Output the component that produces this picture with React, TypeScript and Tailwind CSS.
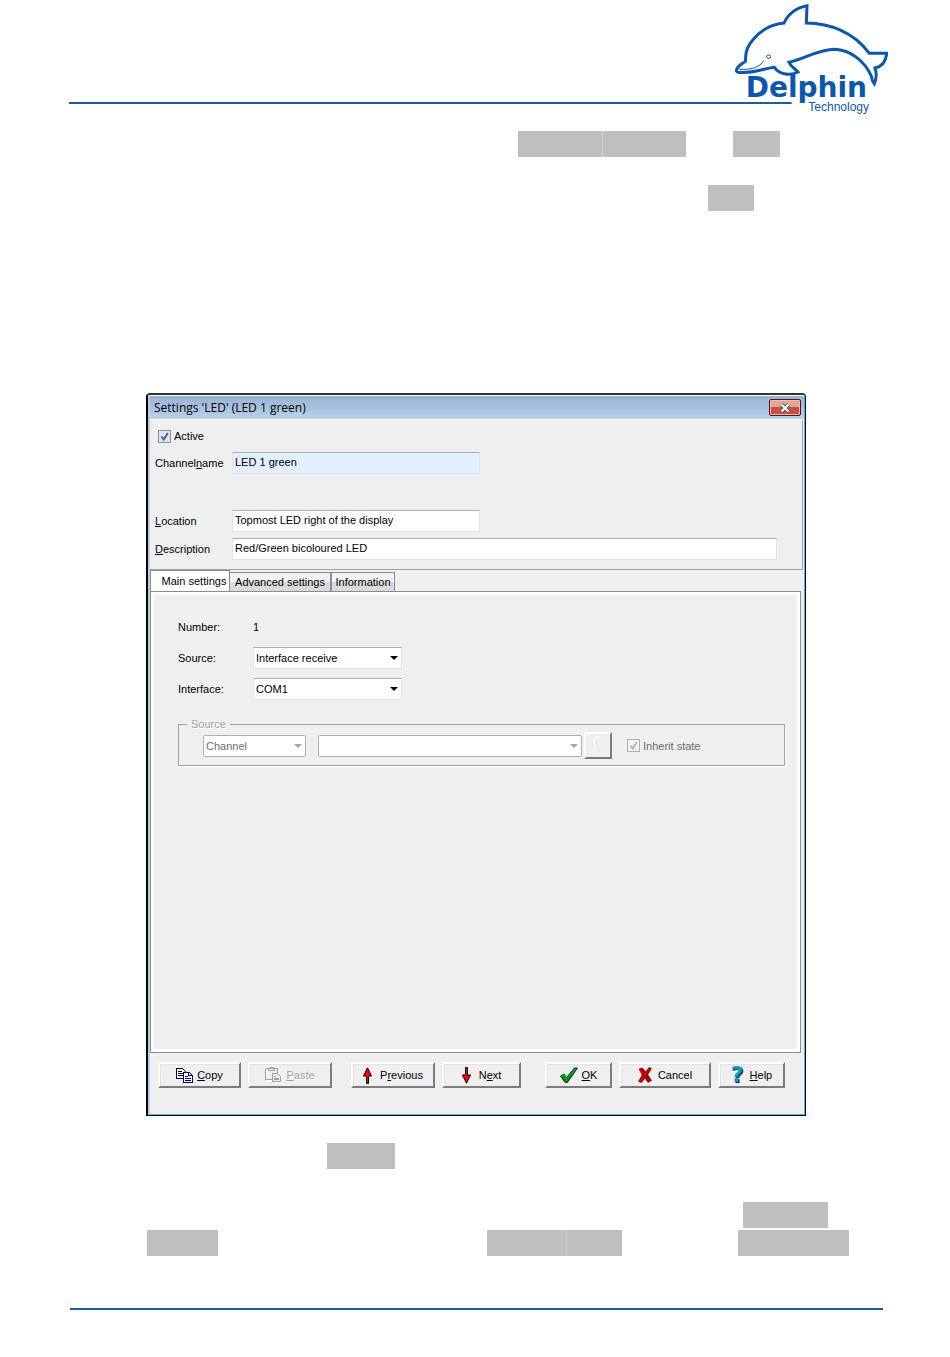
import React, { useState } from 'react';
import clsx from 'clsx';

const DelphinLogo: React.FC = () => (
  <svg viewBox="45 0 459 345" className="h-[115px] w-[153px] shrink-0" role="img" aria-label="Delphin Technology">
    <path d="M45 306H215V312H45Z" fill="#1b5aa9" />
    <g fill="none" stroke="#0b57ae" strokeWidth="9" strokeLinejoin="miter">
      <path d="M50 208C56 192 72 190 77 183C75 160 80 140 100 118C125 88 160 72 192 69C204 42 230 22 261 17L259 69C330 70 402 96 448 160H500C498 186 484 200 465 204C472 225 468 240 463 252C456 244 455 236 454 228C434 184 392 150 344 148C296 148 256 176 207 187C214 202 226 206 234 216C214 228 178 224 163 202C130 206 112 216 76 217C60 218 46 220 50 208Z" />
      <path d="M58 208C92 210 120 202 132 181" strokeWidth="3" />
      <ellipse cx="146" cy="170" rx="6" ry="5" strokeWidth="3" />
    </g>
    <g fill="#0b57ae">
      <text x="77" y="290" fontSize="84" fontWeight="700" fontFamily="DejaVu Sans, sans-serif">Delphin</text>
      <text x="265" y="332" fontSize="36" fontFamily="Liberation Sans, sans-serif">Technology</text>
    </g>
  </svg>
);

const CopyIcon: React.FC = () => (
  <svg viewBox="0 0 17 15" className="h-[15px] w-[17px]" shapeRendering="crispEdges">
    <path d="M.5 .5H6.5L9.5 3.5V10.5H.5Z" fill="#fff" stroke="#000" />
    <path d="M2 3.5H6M2 5.5H7M2 7.5H7" stroke="#000" />
    <path d="M7.5 4.5H13.5L16.5 7.5V14.5H7.5Z" fill="#fff" stroke="#000080" />
    <path d="M12.5 4.5V7.5H16M9 8.5H12M9 10.5H15M9 12.5H15" fill="none" stroke="#000080" />
  </svg>
);

const PasteIcon: React.FC = () => (
  <svg viewBox="0 0 17 16" className="h-4 w-[17px]" shapeRendering="crispEdges" fill="none">
    <path d="M2.5 3.5H14.5V8M2.5 3.5V13.5H8" stroke="#fff" />
    <path d="M1 1.5H12.5V7M.5 1.5V12.5H7M3.5 3.5H9.5V1.5H8V.5H5V1.5H3.5Z" stroke="#a0a0a0" />
    <path d="M7.5 6.5H12.5L15.5 9.5V14.5H7.5ZM9 9.5H11M9 11.5H14M9 12.5H14" stroke="#a0a0a0" />
    <path d="M8 15.5H16.5V10" stroke="#fff" />
  </svg>
);

const ArrowIcon: React.FC<{ down?: boolean }> = ({ down }) => (
  <svg viewBox="0 0 9 17" className={clsx('h-[17px] w-[9px]', down && 'rotate-180')}>
    <path d="M4.5 .8L8.5 9H5.5V16.5H3.5V9H.5Z" fill="#f00" stroke="#000" />
  </svg>
);

const OkIcon: React.FC = () => (
  <svg viewBox="0 0 18 16" className="h-4 w-[18px]">
    <path d="M.5 9L4 7L6.5 10.5L14.5 1H17.5L7.5 15.5H5Z" fill="#009000" stroke="#000060" strokeWidth=".8" />
    <path d="M1.5 8.8L3.8 8L6.5 11.5L16 1.5" fill="none" stroke="#00c800" />
  </svg>
);

const CancelIcon: React.FC = () => (
  <svg viewBox="0 0 14 16" className="h-4 w-[14px]">
    <path d="M1 2L4.5 1L7.5 5L11 .5L13.5 1.5L9.8 7.5L13.5 13.5L10 15.5L7 11L3.5 15.5L.5 14.5L4.2 8Z" fill="#a00" stroke="#500" strokeWidth=".6" />
    <path d="M1.5 2L5 7.5M12.5 1L7 8L1.5 15" fill="none" stroke="#f00" />
  </svg>
);

const HelpIcon: React.FC = () => (
  <span
    aria-hidden="true"
    className="font-['DejaVu_Sans',sans-serif] text-[22px] leading-[22px] font-bold text-[#00a5ad] [text-shadow:1px_1px_0_#000070]"
  >
    ?
  </span>
);

const CheckBox: React.FC<{ id: string; label: string; disabled?: boolean }> = ({ id, label, disabled }) => {
  const [checked, setChecked] = useState(true);

  return (
    <div className="flex h-[14px] items-center gap-[3px]">
      <span className="grid size-[13px]">
        <input
          id={id}
          type="checkbox"
          checked={checked}
          disabled={disabled}
          onChange={(e) => setChecked(e.target.checked)}
          className={clsx(
            'col-start-1 row-start-1 size-[13px] appearance-none border',
            disabled ? 'border-[#b0b0b0] bg-[#f2f2f2]' : 'border-[#8e8f8f] bg-[#dfe4ea]'
          )}
        />
        {checked && (
          <svg viewBox="0 0 13 13" className="pointer-events-none col-start-1 row-start-1 size-[13px]">
            <path d="M3.5 6.5L5.8 9.5L9.8 3" fill="none" strokeWidth="2" stroke={disabled ? '#b4b4b4' : '#4a5f97'} />
          </svg>
        )}
      </span>
      <label htmlFor={id} className={disabled ? 'text-[#6d6d6d]' : ''}>{label}</label>
    </div>
  );
};

interface SelectBoxProps {
  id: string;
  options: string[];
  className: string;
  label?: string;
  disabled?: boolean;
}

const SelectBox: React.FC<SelectBoxProps> = ({ id, options, className, label, disabled }) => (
  <span className={clsx('grid h-[22px] items-center', className)}>
    <select
      id={id}
      aria-label={label}
      disabled={disabled}
      className={clsx(
        'col-start-1 row-start-1 h-full w-full appearance-none border bg-white pl-[2px] outline-none disabled:opacity-100',
        disabled ? 'rounded-[2px] border-[#afafaf] text-[#6d6d6d]' : 'border-[#e2e3ea] border-t-[#abadb3]'
      )}
    >
      {options.map((option) => (
        <option key={option}>{option}</option>
      ))}
    </select>
    <svg viewBox="0 0 8 4" className="pointer-events-none col-start-1 row-start-1 mr-1 h-1 w-2 justify-self-end" fill={disabled ? '#a5a5a5' : '#000'}>
      <path d="M0 0H8L4 4Z" />
    </svg>
  </span>
);

interface ToolButtonProps {
  icon: React.ReactNode;
  className: string;
  disabled?: boolean;
  children: React.ReactNode;
}

const ToolButton: React.FC<ToolButtonProps> = ({ icon, className, disabled, children }) => (
  <button
    type="button"
    disabled={disabled}
    className={clsx(
      'flex h-[26px] shrink-0 items-center justify-center border-2 border-t-white border-l-white border-r-[#7c7c7c] border-b-[#7c7c7c] bg-[#efefef] shadow-[inset_1px_1px_0_#e3e3e3]',
      disabled && 'text-[#a0a0a0] [text-shadow:1px_1px_0_#fff]',
      className
    )}
  >
    {icon}
    <span>{children}</span>
  </button>
);

const textField = 'h-[22px] border border-[#e2e3ea] border-t-[#abadb3] px-[2px] pb-[2px] outline-none';
const marker = 'h-[26px] shrink-0 bg-[#bfbfbf]';

const tabs = ['Main settings', 'Advanced settings', 'Information'];

const SettingsDialog: React.FC = () => (
  <section
    aria-label="Settings"
    className="mr-[144px] ml-[146px] rounded-t-[4px] border border-t-2 border-l-2 border-black border-t-[#333] bg-[#efefef] font-['Liberation_Sans',sans-serif] text-[11px] leading-[14px] text-black"
  >
    <div className="border-r border-b border-l-2 border-[#2cc6e0] border-l-[#bccde0]">
      <header className="flex h-[25px] items-center justify-between border-y border-white bg-linear-to-b from-[#98b2d1] to-[#b9d1ea] pr-[3px] pl-1">
        <h1 className="font-['Open_Sans',sans-serif] text-[12px]">Settings 'LED' (LED 1 green)</h1>
        <button
          type="button"
          aria-label="Close"
          className="flex h-[17px] w-8 items-center justify-center rounded-[2px] border border-[#521526] bg-linear-to-b from-[#e5a49a] from-50% to-[#c9503c] to-50% shadow-[inset_0_0_0_1px_#f0b8ae]"
        >
          <svg viewBox="0 0 12 10" className="h-[10px] w-3">
            <path d="M2.5 1.5L9.5 8.5M9.5 1.5L2.5 8.5" stroke="#535666" strokeWidth="4" />
            <path d="M2.5 1.5L9.5 8.5M9.5 1.5L2.5 8.5" stroke="#fff" strokeWidth="2" />
          </svg>
        </button>
      </header>

      <div className="mr-px border-r border-b border-[#a0a0a0] pt-[9px] pr-[25px] pb-[9px]">
        <div className="pl-2">
          <CheckBox id="active" label="Active" />
        </div>
        <div className="mt-[9px] flex items-center pl-[5px]">
          <label htmlFor="channelname" className="w-[77px]">Channel<u>n</u>ame</label>
          <input id="channelname" defaultValue="LED 1 green" className={clsx(textField, 'w-[248px] bg-[#e1efff]')} />
        </div>
        <div className="mt-9 flex items-center pl-[5px]">
          <label htmlFor="location" className="w-[77px]"><u>L</u>ocation</label>
          <input id="location" defaultValue="Topmost LED right of the display" className={clsx(textField, 'w-[248px] bg-white')} />
        </div>
        <div className="mt-[6px] flex items-center pl-[5px]">
          <label htmlFor="description" className="w-[77px]"><u>D</u>escription</label>
          <input id="description" defaultValue="Red/Green bicoloured LED" className={clsx(textField, 'flex-1 bg-white')} />
        </div>
      </div>

      <div role="tablist" className="flex h-[21px] items-end">
        {tabs.map((tab, index) => (
          <button
            key={tab}
            type="button"
            role="tab"
            aria-selected={index === 0}
            className={clsx(
              'border border-b-0 border-[#898c95] whitespace-nowrap',
              index === 0 && 'h-[21px] w-20 bg-white pl-2',
              index > 0 && 'h-[19px] bg-linear-to-b from-[#f2f2f2] from-50% to-[#dadada] to-50%',
              index === 1 && 'w-[101px] border-l-0',
              index === 2 && 'w-16'
            )}
          >
            {tab}
          </button>
        ))}
      </div>

      <div role="tabpanel" className="mr-[3px] border border-[#898c95] bg-white p-[3px]">
        <div className="min-h-[454px] bg-[#efefef] pt-[21px] pr-3 pl-6">
          <div className="grid grid-cols-[75px_1fr] items-center gap-y-[9px]">
            <span className="leading-[22px]">Number:</span>
            <span>1</span>
            <label htmlFor="source">Source:</label>
            <SelectBox id="source" options={['Interface receive']} className="w-[149px]" />
            <label htmlFor="interface">Interface:</label>
            <SelectBox id="interface" options={['COM1']} className="w-[149px]" />
          </div>

          <fieldset className="mt-[17px] border border-[#a0a0a0] pt-px pb-[6px] pl-6 shadow-[1px_1px_0_#fff]">
            <legend className="-ml-4 px-1 text-[#a0a0a0] [text-shadow:1px_1px_0_#fff]">Source</legend>
            <div className="flex items-center">
              <SelectBox id="kind" label="Source kind" options={['Channel']} className="w-[103px]" disabled />
              <SelectBox id="channel" label="Source channel" options={['']} className="ml-3 w-[264px]" disabled />
              <button
                type="button"
                aria-label="Select channel"
                disabled
                className="ml-[2px] flex h-[27px] w-7 items-center justify-center border-2 border-t-white border-l-white border-r-[#7c7c7c] border-b-[#7c7c7c]"
              >
                <svg viewBox="0 0 18 20" className="h-5 w-[18px]" fill="none" stroke="#fff">
                  <path d="M1 19L6 13V9L5 7V3L7 1H11M16 1H17" />
                </svg>
              </button>
              <div className="ml-[15px]">
                <CheckBox id="inherit" label="Inherit state" disabled />
              </div>
            </div>
          </fieldset>
        </div>
      </div>

      <footer className="flex pt-[9px] pb-[26px] pl-2">
        <ToolButton className="w-[83px] gap-1" icon={<CopyIcon />}><u>C</u>opy</ToolButton>
        <ToolButton className="ml-[7px] w-[84px] gap-1" icon={<PasteIcon />} disabled><u>P</u>aste</ToolButton>
        <ToolButton className="ml-[19px] w-[84px] gap-2" icon={<ArrowIcon />}>P<u>r</u>evious</ToolButton>
        <ToolButton className="ml-[7px] w-[79px] gap-2" icon={<ArrowIcon down />}>N<u>e</u>xt</ToolButton>
        <ToolButton className="ml-6 w-[67px] gap-1" icon={<OkIcon />}><u>O</u>K</ToolButton>
        <ToolButton className="ml-[7px] w-[92px] gap-[6px]" icon={<CancelIcon />}>Cancel</ToolButton>
        <ToolButton className="ml-[7px] w-[67px] gap-[6px]" icon={<HelpIcon />}><u>H</u>elp</ToolButton>
      </footer>
    </div>
  </section>
);

const App: React.FC = () => {
  return (
    <main className="bg-white pb-12">
      <div className="flex items-end pr-[62px] pl-[69px]">
        <div className="mb-[11px] h-[2px] flex-1 bg-[#1b5aa9]" />
        <DelphinLogo />
      </div>

      {/* highlighted words of the paragraph above the dialog */}
      <div className="mt-4 flex pl-[518px]">
        <span className={clsx(marker, 'w-[84px]')} />
        <span className={clsx(marker, 'w-[84px] border-l border-[#d0d0d0]')} />
        <span className={clsx(marker, 'ml-[47px] w-[47px]')} />
      </div>
      <div className="mt-7 mb-[182px] flex pl-[708px]">
        <span className={clsx(marker, 'w-[46px]')} />
      </div>

      <SettingsDialog />

      <div className="mt-[27px] flex pl-[327px]">
        <span className={clsx(marker, 'w-[68px]')} />
      </div>
      <div className="mt-[33px] flex pl-[743px]">
        <span className={clsx(marker, 'w-[85px]')} />
      </div>
      <div className="mt-[2px] flex pl-[147px]">
        <span className={clsx(marker, 'w-[71px]')} />
        <span className={clsx(marker, 'ml-[269px] w-[79px]')} />
        <span className={clsx(marker, 'w-14 border-l border-[#d0d0d0]')} />
        <span className={clsx(marker, 'ml-[116px] w-[111px]')} />
      </div>

      <div className="mt-[52px] mr-[67px] ml-[70px] h-[2px] bg-[#1b5aa9]" />
    </main>
  );
};

export default App;
